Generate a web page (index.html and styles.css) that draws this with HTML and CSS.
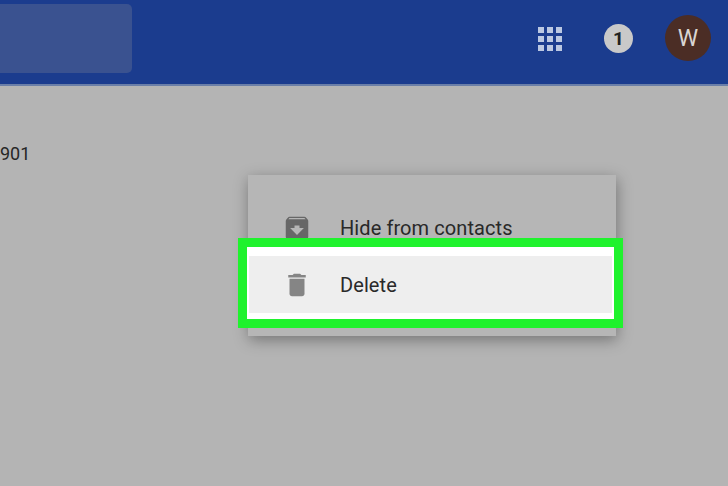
FILE: index.html
```html
<!DOCTYPE html>
<html lang="en">
<head>
    <meta charset="UTF-8">
    <meta name="viewport" content="width=device-width, initial-scale=1.0">
    <title>Contacts</title>
    <link rel="stylesheet" href="styles.css">
</head>
<body>
<header class="topbar">
    <div class="search"></div>
    <div class="topbar-actions">
        <div class="apps">
            <span></span><span></span><span></span>
            <span></span><span></span><span></span>
            <span></span><span></span><span></span>
        </div>
        <div class="badge">1</div>
        <div class="avatar">W</div>
    </div>
</header>

<main class="content">
    <div class="phone">901</div>
</main>

<!-- menu -->
<div class="menu">
    <div class="menu-item">
        <svg class="icon icon-archive" viewBox="0 0 24 24"><path d="M20.54 5.23l-1.39-1.68C18.88 3.21 18.47 3 18 3H6c-.47 0-.88.21-1.16.55L3.46 5.23C3.17 5.57 3 6.02 3 6.5V19c0 1.1.9 2 2 2h14c1.1 0 2-.9 2-2V6.5c0-.48-.17-.93-.46-1.27zM12 17.5L6.5 12H10v-2h4v2h3.5L12 17.5zM5.12 5l.81-1h12l.94 1H5.12z"/></svg>
        <span>Hide from contacts</span>
    </div>
    <div class="menu-item menu-item-active">
        <svg class="icon icon-delete" viewBox="0 0 24 24"><path d="M6 19c0 1.1.9 2 2 2h8c1.1 0 2-.9 2-2V7H6v12zM19 4h-3.5l-1-1h-5l-1 1H5v2h14V4z"/></svg>
        <span>Delete</span>
    </div>
</div>
<div class="highlight"></div>
</body>
</html>
```

FILE: styles.css
```css
html, body {
    margin: 0;
    height: 100%;
}
body {
    position: relative;
    width: 728px;
    height: 486px;
    overflow: hidden;
    font-family: Roboto, "Liberation Sans", sans-serif;
    background-color: #b4b4b4;
}
.topbar {
    display: flex;
    justify-content: space-between;
    align-items: center;
    box-sizing: border-box;
    height: 86px;
    padding: 0 17px 8px 0;
    background-color: #1b3c8e;
    border-bottom: 2px solid #6b7fa8;
}
.search {
    width: 132px;
    height: 69px;
    border-radius: 0 5px 5px 0;
    background-color: #3a5290;
}
.topbar-actions {
    display: flex;
    align-items: center;
}
.apps {
    display: grid;
    grid-template-columns: repeat(3, 6px);
    grid-auto-rows: 6px;
    gap: 3px;
    margin-top: 1px;
    margin-right: 42px;
}
.apps span {
    background-color: #bcc8e2;
}
.badge {
    display: flex;
    align-items: center;
    justify-content: center;
    width: 29px;
    height: 29px;
    margin-top: 1px;
    margin-right: 32px;
    border-radius: 50%;
    font-size: 19px;
    font-weight: 700;
    color: #222222;
    background-color: #c9c9c9;
}
.avatar {
    display: flex;
    align-items: center;
    justify-content: center;
    width: 46px;
    height: 46px;
    border-radius: 50%;
    font-size: 23px;
    color: #d9d5d3;
    background-color: #4b2d25;
}
.content {
    padding-top: 57px;
}
.phone {
    font-size: 18px;
    line-height: 22px;
    color: #262626;
}
.menu {
    position: absolute;
    left: 248px;
    top: 175px;
    width: 368px;
    padding: 24px 0 23px;
    background-color: #b6b6b6;
    box-shadow: 1px 4px 14px rgba(0, 0, 0, 0.35);
}
.menu-item {
    display: flex;
    align-items: center;
    height: 57px;
    padding-left: 34px;
    font-size: 20px;
    letter-spacing: 0.08px;
    color: #292929;
}
.menu-item-active {
    background-color: #eeeeee;
}
.icon {
    flex: none;
    width: 30px;
    height: 30px;
    margin-right: 28px;
}
.icon-archive {
    fill: #676767;
}
.icon-delete {
    fill: #858585;
}
.highlight {
    position: absolute;
    left: 238px;
    top: 238px;
    width: 367px;
    height: 72px;
    border: 9px solid #1ff22d;
    box-shadow: inset 0 9px 0 #ffffff, inset 0 -6px 0 #ffffff, inset 2px 0 0 #ffffff, inset -2px 0 0 #ffffff;
}
```
